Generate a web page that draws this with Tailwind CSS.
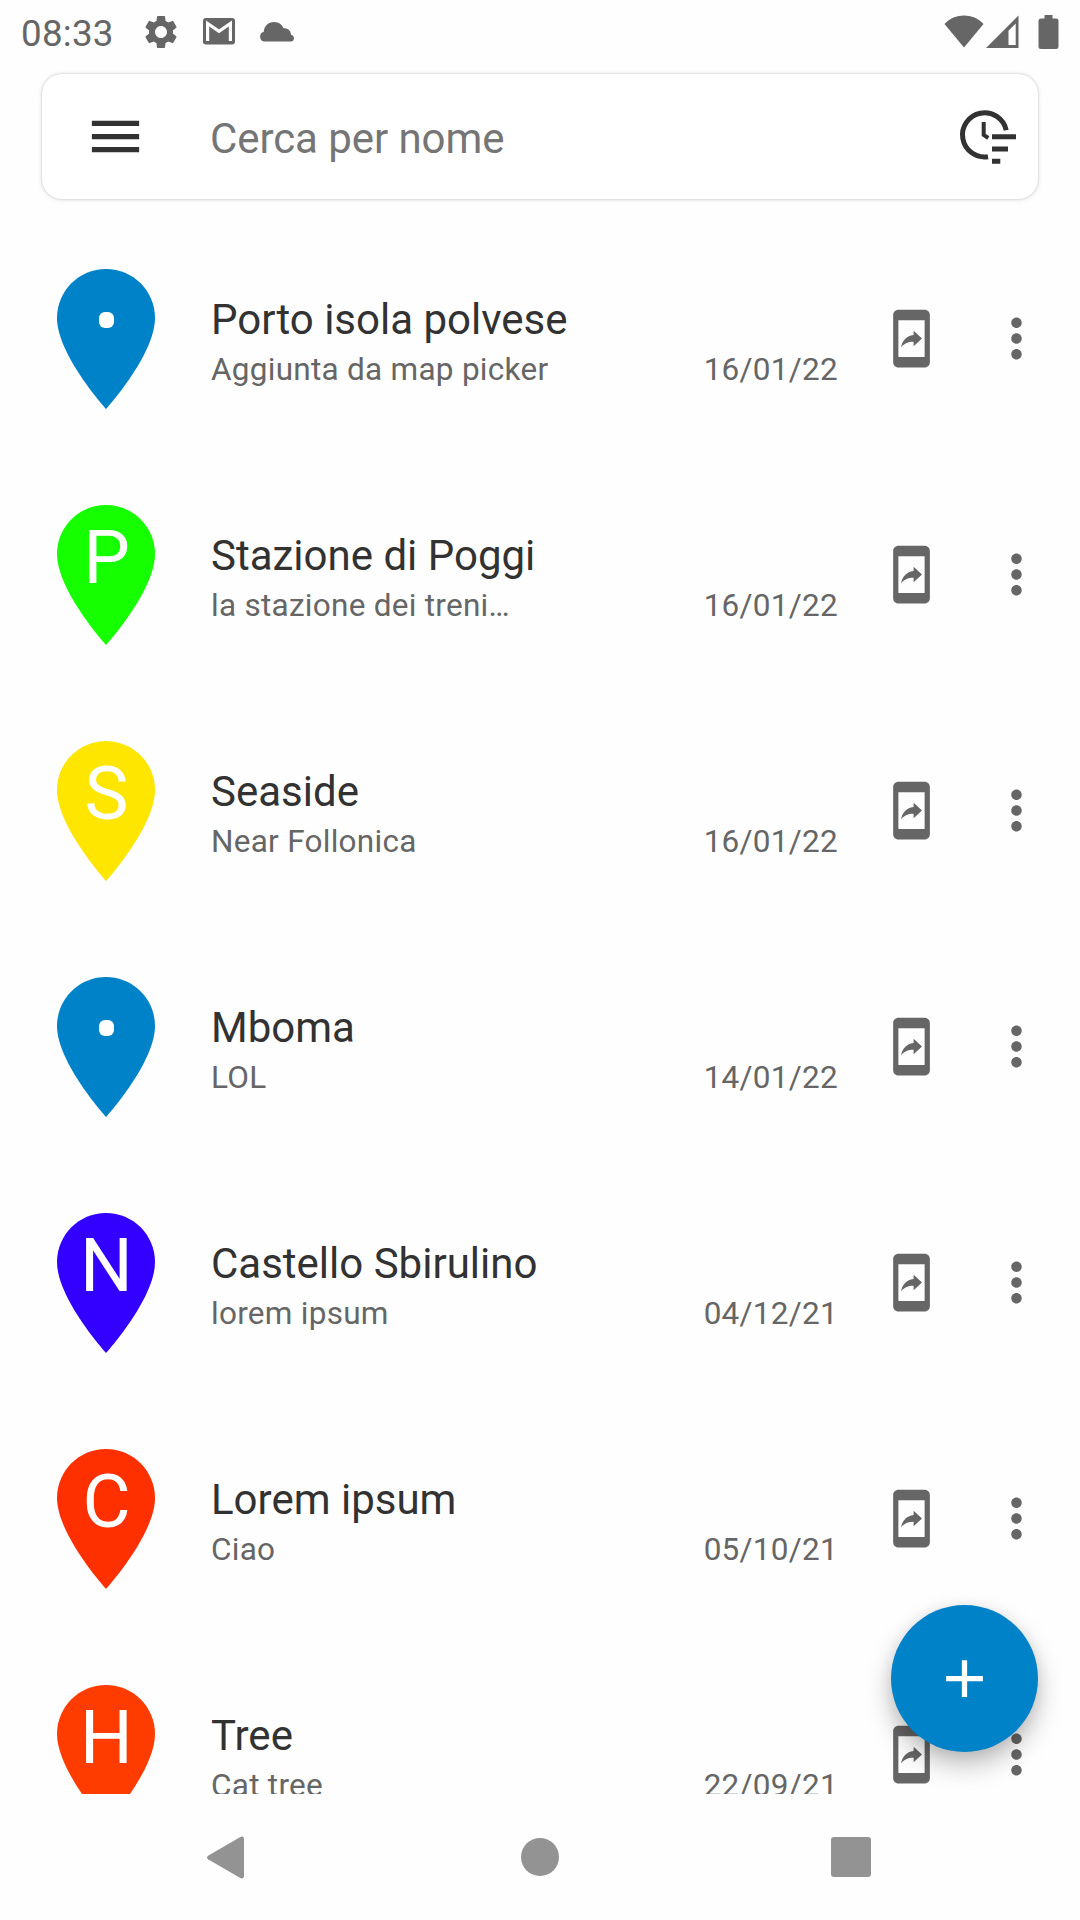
<!DOCTYPE html>
<html lang="it">
<head>
<meta charset="utf-8">
<title>Luoghi</title>
<script src="https://cdn.jsdelivr.net/npm/@tailwindcss/browser@4"></script>
</head>
<body class="bg-[#fefefe]">
<svg class="hidden">
  <symbol id="pin" viewBox="0 0 24 24"><path d="M12 2C8.13 2 5 5.13 5 9c0 5.25 7 13 7 13s7-7.75 7-13c0-3.87-3.13-7-7-7z"/></symbol>
  <symbol id="share" viewBox="0 0 24 24"><path d="M17 1H7c-1.1 0-1.99.9-1.99 2v18c0 1.1.89 2 1.99 2h10c1.1 0 2-.9 2-2V3c0-1.1-.9-2-2-2zm0 18H7V5h10v14zm-4.2-5.78v1.75l3.2-2.99L12.8 9v1.7c-3.11.43-4.35 2.56-4.8 4.7 1.11-1.5 2.58-2.18 4.8-2.18z"/></symbol>
  <symbol id="more" viewBox="0 0 24 24"><path d="M12 8c1.1 0 2-.9 2-2s-.9-2-2-2-2 .9-2 2 .9 2 2 2zm0 2c-1.1 0-2 .9-2 2s.9 2 2 2 2-.9 2-2-.9-2-2-2zm0 6c-1.1 0-2 .9-2 2s.9 2 2 2 2-.9 2-2-.9-2-2-2z"/></symbol>
</svg>
<div class="relative flex h-[1920px] w-[1080px] flex-col overflow-hidden bg-[#fefefe] font-[Roboto,sans-serif]">
  <!-- Status bar -->
  <header class="flex h-[63px] shrink-0 items-center justify-between pr-[21px] pl-[21px] text-[#666]">
    <div class="flex items-center">
      <span class="w-[120px] pt-[3px] text-[36.75px] leading-[43px] tracking-[0.25px]">08:33</span>
      <svg class="h-[40px] w-[40px] fill-current" viewBox="0 0 24 24"><path d="M19.14 12.94c.04-.3.06-.61.06-.94 0-.32-.02-.64-.07-.94l2.03-1.58c.18-.14.23-.41.12-.61l-1.92-3.32c-.12-.22-.37-.29-.59-.22l-2.39.96c-.5-.38-1.03-.7-1.62-.94l-.36-2.54c-.04-.24-.24-.41-.48-.41h-3.84c-.24 0-.43.17-.47.41l-.36 2.54c-.59.24-1.13.57-1.62.94l-2.39-.96c-.22-.08-.47 0-.59.22L2.74 8.87c-.12.21-.08.47.12.61l2.03 1.58c-.05.3-.09.63-.09.94s.02.64.07.94l-2.03 1.58c-.18.14-.23.41-.12.61l1.92 3.32c.12.22.37.29.59.22l2.39-.96c.5.38 1.03.7 1.62.94l.36 2.54c.05.24.24.41.48.41h3.84c.24 0 .44-.17.47-.41l.36-2.54c.59-.24 1.13-.56 1.62-.94l2.39.96c.22.08.47 0 .59-.22l1.92-3.32c.12-.22.07-.47-.12-.61l-2.01-1.58zM12 15.600c-1.98 0-3.6-1.62-3.6-3.6s1.62-3.6 3.6-3.6 3.6 1.62 3.6 3.6-1.62 3.6-3.6 3.6z"/></svg>
      <svg class="ml-[22px] h-[27px] w-[32px]" viewBox="0 0 32 27"><rect width="32" height="26.5" rx="3" fill="currentColor"/><path d="M4.6 23V5.5L16 13.4 27.4 5.5V23" fill="none" stroke="#fefefe" stroke-width="3.2"/></svg>
      <svg class="ml-[24px] h-[24px] w-[36px] fill-current" viewBox="0 0 36 24"><path d="M5 21.500a5 5 0 0 1-.2-9.700C5 6 9.500 2 15 2c4.700 0 8.200 2.800 9.500 6.300 4.400-.2 7.300 2.600 7.500 6.400a3.500 3.500 0 0 1 .5 6.800z"/></svg>
    </div>
    <div class="flex items-start">
      <svg class="h-[34px] w-[40px] fill-current" viewBox="0 0 40 34"><path d="M0.500 9C11-2.200 29-2.200 39.500 9L20 32.500z"/></svg>
      <svg class="ml-[2px] h-[34px] w-[33px]" viewBox="0 0 33 34"><path fill="currentColor" fill-rule="evenodd" d="M0 33L32.500 0.500V33zM22.500 30H29.700V8.500L22.500 15.700z"/></svg>
      <svg class="ml-[19px] h-[34px] w-[21px] fill-current" viewBox="0 0 21 34"><path d="M6.500 0h8v3.500H18a2.500 2.500 0 0 1 2.500 2.500v25.500a2.500 2.500 0 0 1-2.500 2.500H3a2.500 2.500 0 0 1-2.500-2.500V6A2.500 2.500 0 0 1 3 3.500h3.500z"/></svg>
    </div>
  </header>

  <!-- Search -->
  <div class="mx-[42px] mt-[11px] flex h-[125px] shrink-0 items-center rounded-[20px] bg-white pr-[22px] pl-[42px] shadow-[0_0_3px_rgba(0,0,0,0.22),0_1px_6px_rgba(0,0,0,0.07)]">
    <svg class="h-[63px] w-[63px] fill-[#323232]" viewBox="0 0 24 24"><path d="M3 18h18v-2H3v2zm0-5h18v-2H3v2zm0-7v2h18V6H3z"/></svg>
    <span class="ml-[63px] flex-1 pt-[4px] text-[42px] leading-[49px] tracking-[-0.08px] text-[#757575]">Cerca per nome</span>
    <svg class="mb-[3px] h-[58px] w-[58px]" viewBox="0 0 58 58" fill="none" stroke="#323232" stroke-width="5">
      <path d="M30 50.700A22.100 22.100 0 1 1 48.200 24.200"/>
      <path d="M25.700 16V29L30.300 32" stroke-width="4"/>
      <path d="M34 30.700H58M34 43H50M34 55.200H42.300"/>
    </svg>
  </div>

  <!-- Saved places -->
  <main id="places" class="h-[1595px] shrink-0 overflow-hidden pt-[22px]"></main>

  <!-- Navigation bar -->
  <nav class="flex h-[126px] items-center pl-[207px] text-[#939393]">
    <svg class="h-[43px] w-[38px] fill-current" viewBox="0 0 38 43"><path d="M1 19.700L33.300 1Q37 -.5 37 3V40Q37 43.500 33.300 42L1 23.300Q-1 21.500 1 19.700z"/></svg>
    <span class="ml-[276px] h-[38px] w-[38px] rounded-full bg-[#939393]"></span>
    <span class="ml-[272px] h-[40px] w-[40px] rounded-[3px] bg-[#939393]"></span>
  </nav>

  <button class="absolute top-[1605px] left-[891px] flex h-[147px] w-[147px] items-center justify-center rounded-full bg-[#0082c9] shadow-[0_13px_26px_rgba(0,0,0,0.25),0_2px_14px_rgba(0,0,0,0.08)]">
    <svg class="h-[63px] w-[63px] fill-white" viewBox="0 0 24 24"><path d="M19 13h-6v6h-2v-6H5v-2h6V5h2v6h6v2z"/></svg>
  </button>
</div>
<script>
const places = [
  ['', '#0082c9', 'Porto isola polvese', 'Aggiunta da map picker', '16/01/22'],
  ['P', '#15ff00', 'Stazione di Poggi', 'la stazione dei treni…', '16/01/22'],
  ['S', '#ffe600', 'Seaside', 'Near Follonica', '16/01/22'],
  ['', '#0082c9', 'Mboma', 'LOL', '14/01/22'],
  ['N', '#3300ff', 'Castello Sbirulino', 'lorem ipsum', '04/12/21'],
  ['C', '#ff3000', 'Lorem ipsum', 'Ciao', '05/10/21'],
  ['H', '#ff3c00', 'Tree', 'Cat tree', '22/09/21'],
];
document.getElementById('places').innerHTML = places.map(([letter, color, name, note, date]) => `
  <article class="flex h-[236px] items-center pl-[22px]">
    <div class="relative h-[168px] w-[168px]">
      <svg class="h-[168px] w-[168px]" style="fill:${color}"><use href="#pin"/></svg>
      ${letter
        ? `<span class="absolute inset-x-0 top-[23px] pl-px text-center text-[74px] leading-[87px] text-white">${letter}</span>`
        : `<span class="absolute top-[57px] left-[77px] h-[16px] w-[15px] rounded-[6px] bg-white"></span>`}
    </div>
    <div class="ml-[21px] w-[627px] pt-[4px]">
      <h2 class="h-[56px] text-[42px] leading-[49px] text-[#323232]">${name}</h2>
      <div class="flex justify-between text-[31.5px] leading-[37px] tracking-[0.27px] text-[#666]"><p>${note}</p><time>${date}</time></div>
    </div>
    <svg class="mb-[1px] ml-[42px] h-[63px] w-[63px] fill-[#666]"><use href="#share"/></svg>
    <svg class="mb-[1px] ml-[42px] h-[63px] w-[63px] fill-[#666]"><use href="#more"/></svg>
  </article>`).join('');
</script>
</body>
</html>
